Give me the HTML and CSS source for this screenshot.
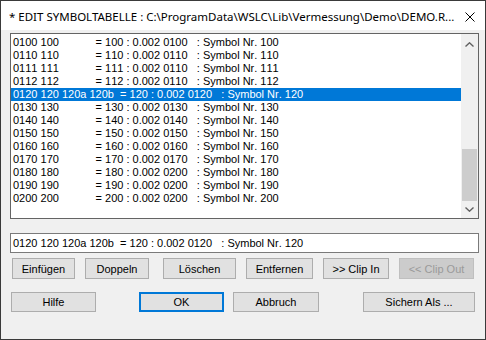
FILE: index.html
```html
<!DOCTYPE html>
<html lang="de">
<head>
  <meta charset="UTF-8">
  <title>Edit Symboltabelle</title>
  <link rel="stylesheet" href="styles.css">
</head>
<body>
  <div class="window">
    <div class="titlebar">
      <span class="title">* EDIT SYMBOLTABELLE : C:\ProgramData\WSLC\Lib\Vermessung\Demo\DEMO.R...</span>
      <svg class="close" width="10" height="10" viewBox="0 0 10 10">
        <path d="M0.5 0.5 L9.5 9.5 M9.5 0.5 L0.5 9.5" stroke="#000" stroke-width="1" fill="none"/>
      </svg>
    </div>

    <div class="client">
      <div class="listbox">
        <ul class="items">
          <li>0100 100            = 100 : 0.002 0100   : Symbol Nr. 100</li>
          <li>0110 110            = 110 : 0.002 0110   : Symbol Nr. 110</li>
          <li>0111 111            = 111 : 0.002 0110   : Symbol Nr. 111</li>
          <li>0112 112            = 112 : 0.002 0110   : Symbol Nr. 112</li>
          <li class="selected">0120 120 120a 120b  = 120 : 0.002 0120   : Symbol Nr. 120</li>
          <li>0130 130            = 130 : 0.002 0130   : Symbol Nr. 130</li>
          <li>0140 140            = 140 : 0.002 0140   : Symbol Nr. 140</li>
          <li>0150 150            = 150 : 0.002 0150   : Symbol Nr. 150</li>
          <li>0160 160            = 160 : 0.002 0160   : Symbol Nr. 160</li>
          <li>0170 170            = 170 : 0.002 0170   : Symbol Nr. 170</li>
          <li>0180 180            = 180 : 0.002 0200   : Symbol Nr. 180</li>
          <li>0190 190            = 190 : 0.002 0200   : Symbol Nr. 190</li>
          <li>0200 200            = 200 : 0.002 0200   : Symbol Nr. 200</li>
        </ul>
        <div class="scrollbar">
          <div class="arrow up">
            <svg width="9" height="5" viewBox="0 0 9 5"><path d="M0.5 4.5 L4.5 0.8 L8.5 4.5" stroke="#606060" stroke-width="1.4" fill="none"/></svg>
          </div>
          <div class="track"><div class="thumb"></div></div>
          <div class="arrow down">
            <svg width="9" height="5" viewBox="0 0 9 5"><path d="M0.5 0.5 L4.5 4.2 L8.5 0.5" stroke="#606060" stroke-width="1.4" fill="none"/></svg>
          </div>
        </div>
      </div>

      <div class="entry">0120 120 120a 120b  = 120 : 0.002 0120   : Symbol Nr. 120</div>

      <div class="toolbar">
        <button class="btn w-einfuegen">Einfügen</button>
        <button class="btn w-doppeln">Doppeln</button>
        <button class="btn w-loeschen">Löschen</button>
        <button class="btn w-entfernen">Entfernen</button>
        <button class="btn w-clipin">&gt;&gt; Clip In</button>
        <button class="btn w-clipout" disabled>&lt;&lt; Clip Out</button>
      </div>

      <div class="actions">
        <button class="btn w-hilfe">Hilfe</button>
        <button class="btn default w-ok">OK</button>
        <button class="btn w-abbruch">Abbruch</button>
        <button class="btn w-sichern">Sichern Als ...</button>
      </div>
    </div>
  </div>
</body>
</html>
```

FILE: styles.css
```css
* {
  box-sizing: border-box;
}
body {
  margin: 0;
  background: #f0f0f0;
  font-family: "Liberation Sans", Arial, sans-serif;
  font-size: 11px;
  color: #000;
}
.window {
  width: 486px;
  height: 340px;
  border: 1px solid #3a3a3a;
  background: #f0f0f0;
}
.titlebar {
  height: 29px;
  background: #fff;
  display: flex;
  align-items: center;
  padding: 2px 10px 0 8px;
}
.title {
  font-family: "Noto Sans", sans-serif;
  font-size: 11.5px;
  white-space: nowrap;
}
.close {
  margin-left: auto;
}
.client {
  padding: 3px 6px 0 9px;
}
.listbox {
  width: 469px;
  height: 186px;
  border: 1px solid #646464;
  background: #fff;
  display: flex;
}
.items {
  flex: 1;
  list-style: none;
  margin: 0;
  padding: 2px 0 0 0;
  font-kerning: none;
}
.items li {
  height: 13px;
  line-height: 13px;
  padding-left: 2px;
  white-space: pre;
}
.items li.selected {
  background: #0078d7;
  color: #fff;
}
.scrollbar {
  width: 17px;
  background: #f0f0f0;
  display: flex;
  flex-direction: column;
}
.arrow {
  height: 17px;
  display: flex;
  align-items: center;
  justify-content: center;
}
.arrow.up {
  padding-top: 4px;
}
.track {
  flex: 1;
  display: flex;
  flex-direction: column;
  justify-content: flex-end;
}
.thumb {
  height: 52px;
  margin: 0 1px;
  background: #cdcdcd;
}
.entry {
  margin-top: 14px;
  width: 469px;
  height: 20px;
  border: 1px solid #7a7a7a;
  background: #fff;
  padding-left: 2px;
  line-height: 18px;
  white-space: pre;
  overflow: hidden;
  font-kerning: none;
}
.toolbar {
  margin: 5px 0 0 2px;
  display: flex;
  gap: 10px;
}
.actions {
  margin: 13px 0 0 1px;
  display: flex;
}
.btn {
  height: 21px;
  padding: 0;
  font-family: inherit;
  font-size: 11px;
  color: #000;
  background: #e1e1e1;
  border: 1px solid #adadad;
}
.btn:disabled {
  background: #cccccc;
  border-color: #bfbfbf;
  color: #9a9a9a;
}
.btn.default {
  border: 2px solid #0078d7;
}
.actions .btn {
  height: 20px;
}
.w-einfuegen { width: 63px; }
.w-doppeln { width: 64px; margin-right: 4px; }
.w-loeschen { width: 73px; }
.w-entfernen { width: 67px; }
.w-clipin { width: 66px; }
.w-clipout { width: 75px; }
.w-hilfe { width: 85px; }
.w-ok { width: 85px; margin-left: 43px; }
.w-abbruch { width: 86px; margin-left: 9px; }
.w-sichern { width: 112px; margin-left: 44px; }
```
